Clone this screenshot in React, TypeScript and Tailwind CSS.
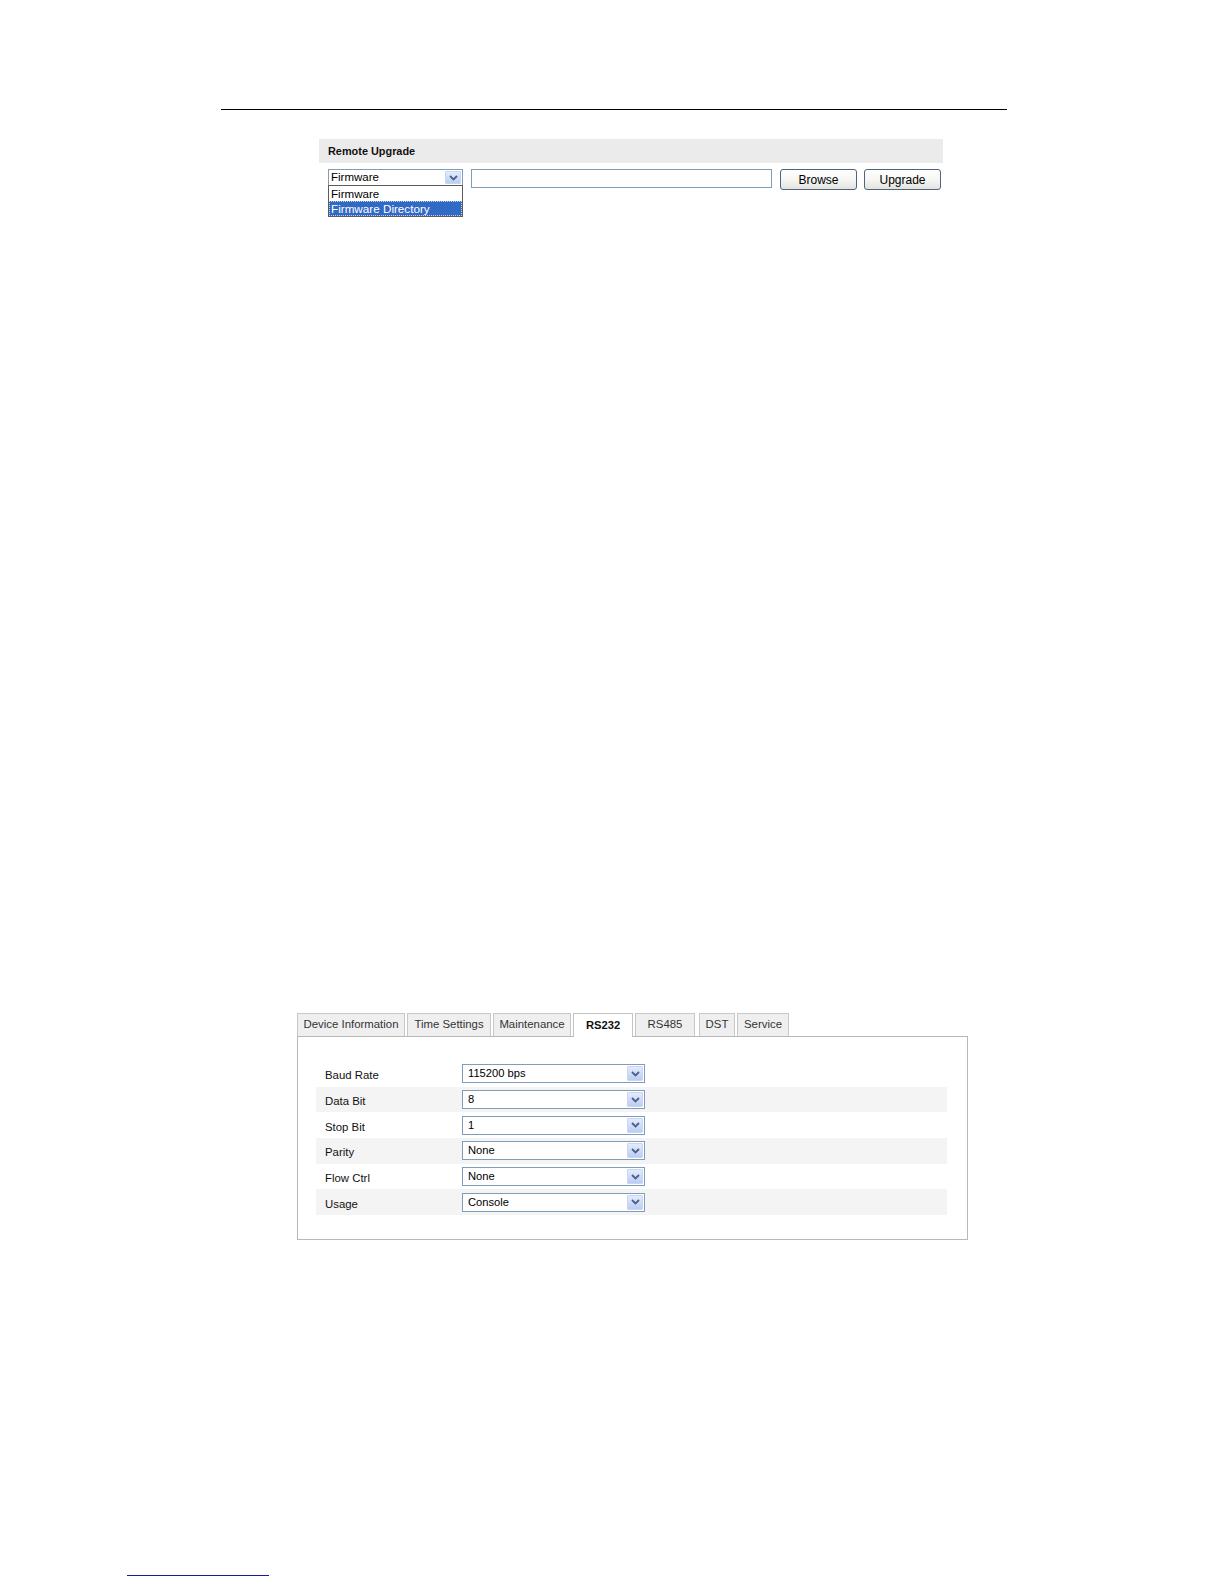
import React from "react";

function Chevron() {
  return (
    <svg width="9" height="6" viewBox="0 0 9 6" className="block">
      <path d="M1 1 L4.5 4.5 L8 1" fill="none" stroke="#4d6185" strokeWidth="1.8" />
    </svg>
  );
}

function ArrowBtn() {
  return (
    <div className="w-[16px] self-stretch my-px mr-px flex items-center justify-center bg-gradient-to-b from-[#e3ebfd] to-[#bccdf3] border border-[#c9d6f3] rounded-[1px]">
      <Chevron />
    </div>
  );
}

function Select({ value }: { value: string }) {
  return (
    <div className="w-[183px] h-[19px] border border-[#7f9db9] bg-white flex items-stretch">
      <div className="flex-1 pl-[5px] flex items-center text-[11.2px] leading-none text-black">{value}</div>
      <ArrowBtn />
    </div>
  );
}

const tabs = [
  { label: "Device Information", w: "w-[108px]", ml: "ml-0" },
  { label: "Time Settings", w: "w-[84px]", ml: "ml-[2px]" },
  { label: "Maintenance", w: "w-[78px]", ml: "ml-[2px]" },
  { label: "RS232", w: "w-[60px]", ml: "ml-[2px]", active: true },
  { label: "RS485", w: "w-[60px]", ml: "ml-[2px]" },
  { label: "DST", w: "w-[36px]", ml: "ml-[4px]" },
  { label: "Service", w: "w-[52px]", ml: "ml-[2px]" },
];

const rows = [
  { label: "Baud Rate", value: "115200 bps" },
  { label: "Data Bit", value: "8" },
  { label: "Stop Bit", value: "1" },
  { label: "Parity", value: "None" },
  { label: "Flow Ctrl", value: "None" },
  { label: "Usage", value: "Console" },
];

export default function App() {
  return (
    <div className="w-[1224px] h-[1584px] bg-white flex flex-col font-['Liberation_Sans',Arial,sans-serif] text-black">
      <div className="ml-[221px] mt-[109px] w-[786px] h-px bg-black" />

      <div className="ml-[319px] mt-[29px] w-[624px] h-[50px]">
        <div className="h-[24px] bg-[#ebebeb] flex items-center pl-[9px] text-[10.9px] font-bold text-[#111]">
          Remote Upgrade
        </div>
        <div className="flex items-start mt-[6px] pl-[9px]">
          <div className="relative w-[135px]">
            <div className="w-[135px] h-[17px] border border-[#7f9db9] bg-white flex items-stretch">
              <div className="flex-1 pl-[2px] flex items-center text-[11.5px] leading-none">Firmware</div>
              <ArrowBtn />
            </div>
            <div className="absolute left-0 top-[16px] w-[135px] border border-[#5c5c5c] bg-white z-10">
              <div className="h-[15px] pl-[2px] flex items-center text-[11.6px] leading-none">Firmware</div>
              <div className="h-[15px] bg-[#316ac5] text-white border border-dotted border-[#c8d4ea] pl-px flex items-center text-[11.7px] leading-none">
                Firmware Directory
              </div>
            </div>
          </div>
          <div className="ml-[8px] w-[301px] h-[19px] border border-[#7f9db9] bg-white" />
          <button className="ml-[8px] w-[77px] h-[21px] border border-[#4e6480] rounded-[3px] bg-gradient-to-b from-white via-[#f6f6f4] to-[#e3e3de] text-[12px] leading-none text-black flex items-center justify-center">
            Browse
          </button>
          <button className="ml-[7px] w-[77px] h-[21px] border border-[#4e6480] rounded-[3px] bg-gradient-to-b from-white via-[#f6f6f4] to-[#e3e3de] text-[12px] leading-none text-black flex items-center justify-center">
            Upgrade
          </button>
        </div>
      </div>

      <div className="ml-[297px] mt-[824px] w-[671px]">
        <div className="flex items-end h-[23px] relative z-10">
          {tabs.map((t) =>
            t.active ? (
              <div
                key={t.label}
                className={`${t.w} ${t.ml} h-[24px] -mb-px bg-white border border-b-0 border-[#c3c3c3] flex items-center justify-center text-[11.2px] font-bold text-[#111]`}
              >
                {t.label}
              </div>
            ) : (
              <div
                key={t.label}
                className={`${t.w} ${t.ml} h-[23px] bg-[#efefef] border border-b-0 border-[#c8c8c8] flex items-center justify-center text-[11.4px] text-[#333]`}
              >
                {t.label}
              </div>
            )
          )}
        </div>
        <div className="h-[204px] border border-[#b8b8b8] pt-[24px] pl-[18px] pr-[20px]">
          {rows.map((r, i) => (
            <div
              key={r.label}
              className={`h-[25.7px] flex items-center ${i % 2 === 1 ? "bg-[#f4f4f4]" : "bg-white"}`}
            >
              <div className="w-[146px] pl-[9px] pt-[4px] text-[11.4px] text-[#111]">{r.label}</div>
              <Select value={r.value} />
            </div>
          ))}
        </div>
      </div>

      <div className="ml-[127px] mt-[335px] w-[142px] h-px bg-[#1c1c96]" />
    </div>
  );
}
